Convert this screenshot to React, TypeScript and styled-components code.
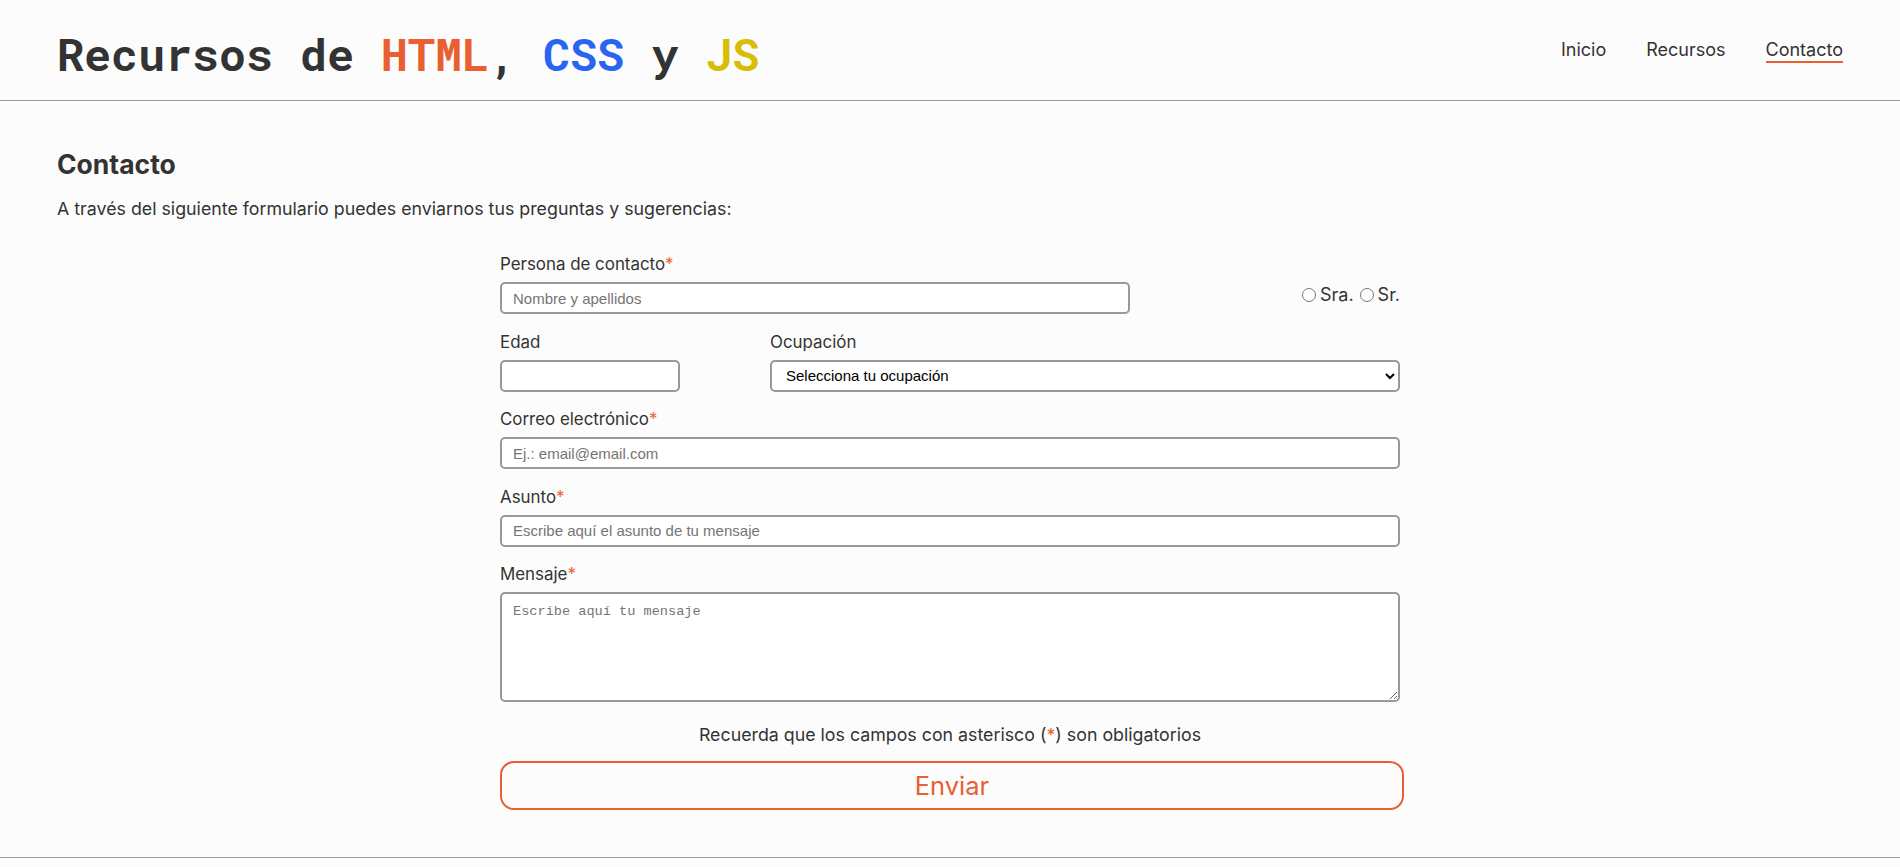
import React from "react";
import styled, { createGlobalStyle } from "styled-components";

const ORANGE = "#e95f32";
const BLUE = "#2965f1";
const YELLOW = "#d9bc06";
const TEXT = "#333333";

const GlobalStyle = createGlobalStyle`
  *, *::before, *::after { box-sizing: border-box; }
  html, body { margin: 0; padding: 0; }
  body {
    background: #fcfcfc;
    color: ${TEXT};
    font-family: Inter, "Noto Sans", Roboto, sans-serif;
  }
`;

const Header = styled.header`
  display: flex;
  align-items: center;
  justify-content: space-between;
  height: 101px;
  padding: 0 57px;
  border-bottom: 1px solid #9a9a9a;
`;

const Title = styled.h1`
  margin: 0;
  padding-top: 7px;
  font-family: "Roboto Mono", "Liberation Mono", "DejaVu Sans Mono", monospace;
  font-size: 45px;
  font-weight: 700;
  color: ${TEXT};
  letter-spacing: 0;
`;

const Tint = styled.span<{ $color: string }>`
  color: ${(p) => p.$color};
`;

const Nav = styled.nav`
  display: flex;
  gap: 40px;
  padding-top: 1px;
`;

const NavLink = styled.a<{ $active?: boolean }>`
  font-size: 18px;
  line-height: 22px;
  color: ${TEXT};
  text-decoration: none;
  border-bottom: 2px solid ${(p) => (p.$active ? ORANGE : "transparent")};
  cursor: pointer;
`;

const Main = styled.main`
  padding: 48px 57px 47px;
`;

const Heading = styled.h2`
  margin: 0;
  font-size: 26.5px;
  line-height: 31px;
  font-weight: 700;
`;

const Intro = styled.p`
  margin: 18px 0 0;
  font-size: 17.8px;
  line-height: 22px;
`;

const Form = styled.form`
  width: 900px;
  margin: 33px auto 0;
`;

const Row = styled.div`
  display: flex;
  align-items: flex-end;
  justify-content: space-between;
  margin-bottom: 16.5px;
`;

const Field = styled.div<{ $width?: string }>`
  display: flex;
  flex-direction: column;
  width: ${(p) => p.$width || "100%"};
`;

const Label = styled.label`
  display: block;
  font-size: 16.9px;
  line-height: 22px;
  margin-bottom: 7px;
  color: ${TEXT};
`;

const Required = styled.span`
  color: ${ORANGE};
`;

const TextInput = styled.input`
  width: 100%;
  height: 32px;
  padding: 0 11px;
  border: 2px solid #999999;
  border-radius: 5px;
  background: #ffffff;
  font-family: "Liberation Sans", Arial, sans-serif;
  font-size: 15px;
  color: #000;
  outline: none;
  &::placeholder { color: #757575; }
`;

const Select = styled.select`
  width: 100%;
  height: 32px;
  padding: 0 10px;
  border: 2px solid #999999;
  border-radius: 5px;
  background: #ffffff;
  font-family: "Liberation Sans", Arial, sans-serif;
  font-size: 15px;
  color: #000;
  outline: none;
`;

const TextArea = styled.textarea`
  width: 100%;
  height: 110px;
  padding: 10px 11px;
  border: 2px solid #999999;
  border-radius: 5px;
  background: #ffffff;
  font-family: "Liberation Mono", "DejaVu Sans Mono", monospace;
  font-size: 13.6px;
  color: #000;
  outline: none;
  display: block;
  &::placeholder { color: #757575; }
`;

const RadioGroup = styled.div`
  display: flex;
  align-items: center;
  gap: 1px;
  padding-bottom: 8px;
  font-size: 18px;
  line-height: 22px;
`;

const RadioLabel = styled.label`
  display: inline-flex;
  align-items: center;
`;

const Radio = styled.input`
  width: 14px;
  height: 14px;
  margin: 0 4px 0 5px;
`;

const Note = styled.p`
  margin: 22px 0 0;
  text-align: center;
  font-size: 17.8px;
  line-height: 22px;
`;

const Submit = styled.button`
  display: block;
  width: 904px;
  height: 49px;
  margin-top: 15px;
  border: 2px solid ${ORANGE};
  border-radius: 14px;
  background: transparent;
  color: ${ORANGE};
  font-family: Inter, "Noto Sans", sans-serif;
  font-size: 25.5px;
  cursor: pointer;
`;

const Footer = styled.footer`
  border-top: 1px solid #9a9a9a;
  height: 60px;
`;

export default function App() {
  return (
    <>
      <GlobalStyle />
      <Header>
        <Title>
          Recursos de <Tint $color={ORANGE}>HTML</Tint>, <Tint $color={BLUE}>CSS</Tint> y{" "}
          <Tint $color={YELLOW}>JS</Tint>
        </Title>
        <Nav>
          <NavLink>Inicio</NavLink>
          <NavLink>Recursos</NavLink>
          <NavLink $active>Contacto</NavLink>
        </Nav>
      </Header>
      <Main>
        <Heading>Contacto</Heading>
        <Intro>A través del siguiente formulario puedes enviarnos tus preguntas y sugerencias:</Intro>
        <Form onSubmit={(e) => e.preventDefault()}>
          <Row>
            <Field $width="70%">
              <Label htmlFor="nombre">
                Persona de contacto<Required>*</Required>
              </Label>
              <TextInput id="nombre" type="text" placeholder="Nombre y apellidos" />
            </Field>
            <RadioGroup>
              <RadioLabel>
                <Radio type="radio" name="trato" value="sra" />
                Sra.
              </RadioLabel>
              <RadioLabel>
                <Radio type="radio" name="trato" value="sr" />
                Sr.
              </RadioLabel>
            </RadioGroup>
          </Row>
          <Row>
            <Field $width="20%">
              <Label htmlFor="edad">Edad</Label>
              <TextInput id="edad" type="text" />
            </Field>
            <Field $width="70%">
              <Label htmlFor="ocupacion">Ocupación</Label>
              <Select id="ocupacion" defaultValue="">
                <option value="">Selecciona tu ocupación</option>
                <option value="estudiante">Estudiante</option>
                <option value="profesional">Profesional</option>
              </Select>
            </Field>
          </Row>
          <Row>
            <Field>
              <Label htmlFor="correo">
                Correo electrónico<Required>*</Required>
              </Label>
              <TextInput id="correo" type="email" placeholder="Ej.: email@email.com" />
            </Field>
          </Row>
          <Row>
            <Field>
              <Label htmlFor="asunto">
                Asunto<Required>*</Required>
              </Label>
              <TextInput id="asunto" type="text" placeholder="Escribe aquí el asunto de tu mensaje" />
            </Field>
          </Row>
          <Field>
            <Label htmlFor="mensaje">
              Mensaje<Required>*</Required>
            </Label>
            <TextArea id="mensaje" placeholder="Escribe aquí tu mensaje" />
          </Field>
          <Note>
            Recuerda que los campos con asterisco (<Required>*</Required>) son obligatorios
          </Note>
          <Submit type="submit">Enviar</Submit>
        </Form>
      </Main>
      <Footer />
    </>
  );
}
